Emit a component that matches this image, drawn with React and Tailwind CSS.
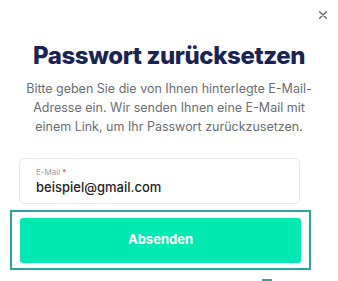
import { useState } from "react";

export default function App() {
  const [email, setEmail] = useState("beispiel@gmail.com");

  return (
    <div className="relative w-[338px] h-[281px] overflow-hidden bg-white font-['Inter',sans-serif]">
      <button
        type="button"
        className="absolute top-[9px] right-[9px] w-[12px] h-[12px] flex items-center justify-center text-[#5f6470]"
      >
        <svg viewBox="0 0 12 12" className="w-[10px] h-[10px]" fill="none" stroke="currentColor" strokeWidth="1.6" strokeLinecap="round">
          <path d="M2 2l8 8M10 2l-8 8" />
        </svg>
      </button>

      <div className="flex flex-col items-center pt-[40px]">
        <h1 className="text-[24px] leading-[32px] font-extrabold tracking-[-0.4px] text-[#1a2351]">
          Passwort zurücksetzen
        </h1>
        <p className="mt-[7px] w-[290px] text-center text-[12.5px] leading-[19px] text-[#6a6d73]">
          Bitte geben Sie die von Ihnen hinterlegte E-Mail-Adresse ein. Wir senden Ihnen eine E-Mail mit einem Link, um Ihr Passwort zurückzusetzen.
        </p>
      </div>

      <form className="mt-[22px] flex flex-col pl-[10px]" onSubmit={(e) => e.preventDefault()}>
        <div className="ml-[9px] w-[281px] h-[46px] rounded-[5px] border border-[#e6e7ec] flex flex-col justify-center pl-[16px]">
          <label htmlFor="email" className="text-[8px] leading-[10px] text-[#9a9ca6]">
            E-Mail <span className="text-[#e5344b]">*</span>
          </label>
          <input
            id="email"
            type="email"
            value={email}
            onChange={(e) => setEmail(e.target.value)}
            className="mt-[2px] outline-none text-[13px] leading-[16px] font-medium text-[#1f2126] bg-transparent"
          />
        </div>
        <div className="mt-[6px] w-[301px] h-[60px] border-2 border-[#2aa3a3] flex items-center justify-center">
          <button
            type="submit"
            className="w-[281px] h-[45px] rounded-[3px] bg-[#02e8b3] text-white text-[13px] font-bold"
          >
            Absenden
          </button>
        </div>
      </form>

      <div className="absolute left-[262px] top-[279px] w-[10px] h-[2px] bg-[#2aa3a3]" />
    </div>
  );
}
